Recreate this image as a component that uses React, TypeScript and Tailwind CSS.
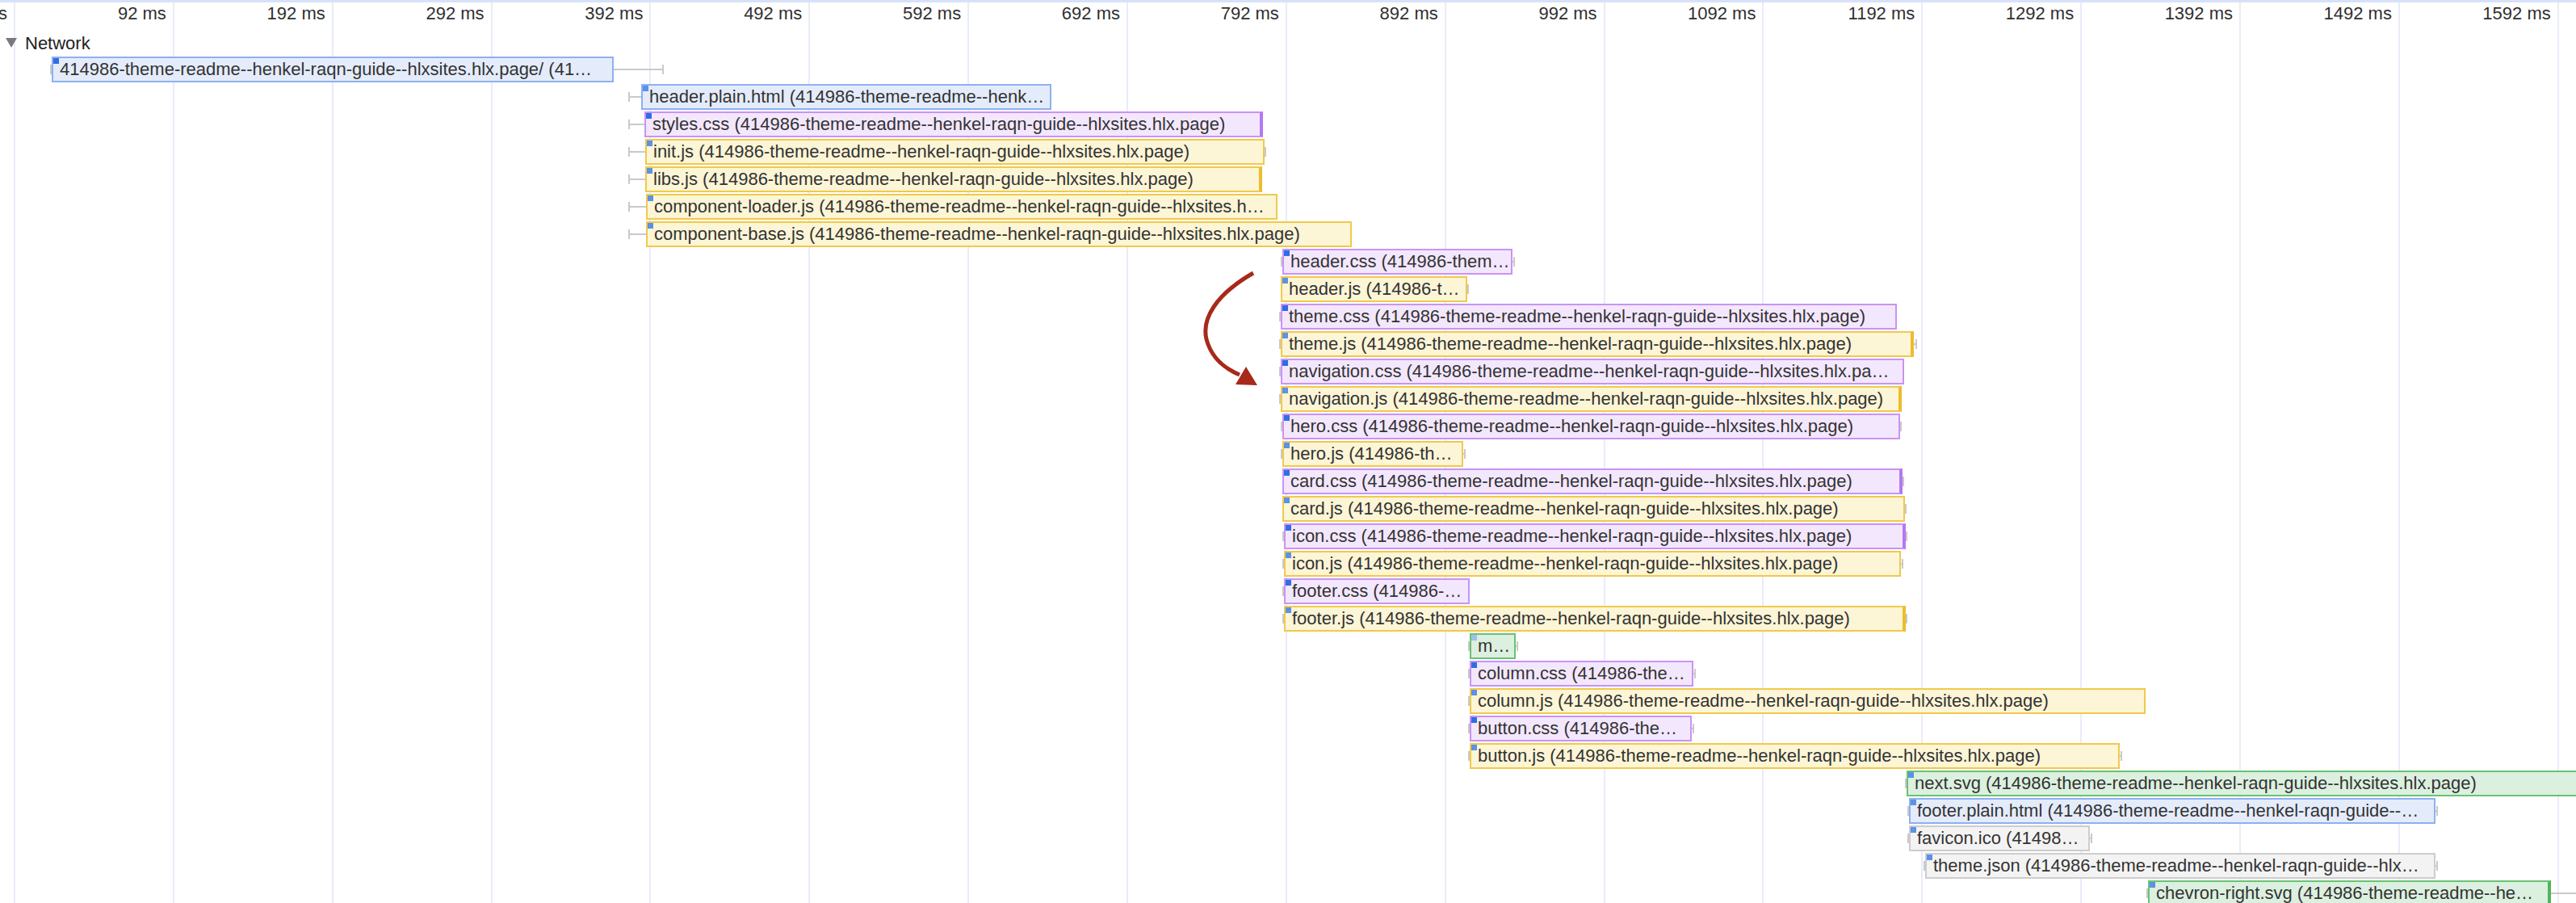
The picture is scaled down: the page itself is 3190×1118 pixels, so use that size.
import React from "react";

type Kind = "html" | "css" | "js" | "img" | "other";

type Req = {
  label: string;
  kind: Kind;
  left: number;
  right: number;
  wl?: number; // whisker start (left)
  wr?: number; // whisker end (right)
  sq?: string;
  thick?: boolean;
};

const SITE = "414986-theme-readme--henkel-raqn-guide--hlxsites.hlx.page";

const KIND: Record<Kind, string> = {
  html: "bg-[#e4ecfb] border-[#8db0f1]",
  css: "bg-[#f3e7fd] border-[#c993f6]",
  js: "bg-[#fcf5d6] border-[#f1c94b]",
  img: "bg-[#dcf0df] border-[#69c275]",
  other: "bg-[#f3f3f3] border-[#cdcdcd]",
};

const THICK: Record<Kind, string> = {
  html: "border-r-[4px] border-r-[#6f9cf0]",
  css: "border-r-[4px] border-r-[#b777f3]",
  js: "border-r-[4px] border-r-[#ecbd2c]",
  img: "border-r-[4px] border-r-[#52b35f]",
  other: "border-r-[4px] border-r-[#bdbdbd]",
};

const DARK = "#2e6ee6";
const LIGHT = "#5b92e6";

const rows: Req[] = [
  { label: `${SITE}/ (41…`, kind: "html", left: 64, right: 760, wl: 62, wr: 822, sq: DARK },
  { label: "header.plain.html (414986-theme-readme--henk…", kind: "html", left: 794, right: 1302, wl: 778, sq: LIGHT },
  { label: `styles.css (${SITE})`, kind: "css", left: 798, right: 1564, wl: 778, sq: DARK, thick: true },
  { label: `init.js (${SITE})`, kind: "js", left: 799, right: 1566, wl: 778, wr: 1568, sq: LIGHT },
  { label: `libs.js (${SITE})`, kind: "js", left: 799, right: 1563, wl: 778, sq: LIGHT, thick: true },
  { label: "component-loader.js (414986-theme-readme--henkel-raqn-guide--hlxsites.h…", kind: "js", left: 800, right: 1582, wl: 778, sq: LIGHT },
  { label: `component-base.js (${SITE})`, kind: "js", left: 800, right: 1674, wl: 778, sq: LIGHT },
  { label: "header.css (414986-them…", kind: "css", left: 1588, right: 1873, wl: 1586, wr: 1876, sq: DARK },
  { label: "header.js (414986-t…", kind: "js", left: 1586, right: 1817, wr: 1819, sq: LIGHT },
  { label: `theme.css (${SITE})`, kind: "css", left: 1586, right: 2349, wl: 1584, sq: DARK },
  { label: `theme.js (${SITE})`, kind: "js", left: 1586, right: 2370, wl: 1584, wr: 2374, sq: LIGHT, thick: true },
  { label: "navigation.css (414986-theme-readme--henkel-raqn-guide--hlxsites.hlx.pa…", kind: "css", left: 1586, right: 2358, wl: 1584, sq: DARK },
  { label: `navigation.js (${SITE})`, kind: "js", left: 1586, right: 2355, wl: 1584, sq: LIGHT, thick: true },
  { label: `hero.css (${SITE})`, kind: "css", left: 1588, right: 2353, wl: 1586, wr: 2355, sq: DARK },
  { label: "hero.js (414986-th…", kind: "js", left: 1588, right: 1812, wl: 1586, wr: 1815, sq: LIGHT },
  { label: `card.css (${SITE})`, kind: "css", left: 1588, right: 2356, wr: 2358, sq: DARK, thick: true },
  { label: `card.js (${SITE})`, kind: "js", left: 1588, right: 2359, wr: 2361, sq: LIGHT },
  { label: `icon.css (${SITE})`, kind: "css", left: 1590, right: 2360, wl: 1588, wr: 2362, sq: DARK, thick: true },
  { label: `icon.js (${SITE})`, kind: "js", left: 1590, right: 2354, wl: 1588, wr: 2357, sq: LIGHT },
  { label: "footer.css (414986-…", kind: "css", left: 1590, right: 1820, wl: 1588, sq: DARK },
  { label: `footer.js (${SITE})`, kind: "js", left: 1590, right: 2360, wl: 1588, wr: 2362, sq: LIGHT, thick: true },
  { label: "m…", kind: "img", left: 1820, right: 1877, wl: 1818, wr: 1880, sq: "#9dc2ea" },
  { label: "column.css (414986-the…", kind: "css", left: 1820, right: 2097, wl: 1818, wr: 2100, sq: DARK },
  { label: `column.js (${SITE})`, kind: "js", left: 1820, right: 2657, wl: 1818, sq: LIGHT },
  { label: "button.css (414986-the…", kind: "css", left: 1820, right: 2095, wl: 1818, wr: 2098, sq: DARK },
  { label: `button.js (${SITE})`, kind: "js", left: 1820, right: 2625, wl: 1818, wr: 2628, sq: LIGHT },
  { label: `next.svg (${SITE})`, kind: "img", left: 2361, right: 3200, wl: 2359, sq: LIGHT },
  { label: "footer.plain.html (414986-theme-readme--henkel-raqn-guide--…", kind: "html", left: 2364, right: 3016, wl: 2362, wr: 3019, sq: LIGHT },
  { label: "favicon.ico (41498…", kind: "other", left: 2364, right: 2588, wl: 2362, wr: 2591, sq: LIGHT },
  { label: "theme.json (414986-theme-readme--henkel-raqn-guide--hlx…", kind: "other", left: 2384, right: 3016, wl: 2382, wr: 3019, sq: LIGHT },
  { label: "chevron-right.svg (414986-theme-readme--he…", kind: "img", left: 2660, right: 3159, wl: 2658, wr: 3200, sq: LIGHT, thick: true },
];

// grid: 100 ms every 196.87px, first line at 18px (-8 ms)
const STEP = 196.87;
const FIRST = 18;
const ticks = Array.from({ length: 17 }, (_, k) => k * 100 - 8);

function Whisker({ from, to, tickAt }: { from: number; to: number; tickAt: "start" | "end" }) {
  return (
    <div className={`flex h-[12px] shrink-0 items-center ${tickAt === "end" ? "flex-row-reverse" : ""}`} style={{ width: to - from }}>
      <div className="h-[12px] w-[2px] shrink-0 bg-[#c9c9c9]" />
      <div className="h-[2px] grow bg-[#c9c9c9]" />
    </div>
  );
}

function Row({ r }: { r: Req }) {
  const start = r.wl ?? r.left;
  return (
    <div className="flex h-[32px] shrink-0 items-center">
      <div className="shrink-0" style={{ width: start }} />
      {r.wl !== undefined && <Whisker from={r.wl} to={r.left} tickAt="start" />}
      <div
        className={`relative h-[32px] shrink-0 border-2 ${KIND[r.kind]} ${r.thick ? THICK[r.kind] : ""} overflow-hidden whitespace-nowrap pl-[8px] text-[22px] leading-[28px] text-[#333]`}
        style={{ width: r.right - r.left }}
      >
        <span className="absolute left-0 top-0 h-[7px] w-[7px]" style={{ background: r.sq }} />
        {r.label}
      </div>
      {r.wr !== undefined && <Whisker from={r.right} to={r.wr} tickAt="end" />}
    </div>
  );
}

export default function App() {
  return (
    <div
      className="relative h-[1118px] w-[3190px] overflow-hidden bg-white text-[#333]"
      style={{ fontFamily: '"Liberation Sans", Arial, sans-serif' }}
    >
      {/* grid lines, drawn behind everything */}
      <div className="pointer-events-none absolute inset-0 flex">
        <div className="shrink-0" style={{ width: FIRST - 1 }} />
        {ticks.map((ms) => (
          <div key={ms} className="flex shrink-0" style={{ width: STEP }}>
            <div className="h-full w-[2px] bg-[#e8ecfa]" />
          </div>
        ))}
      </div>

      <div className="relative flex h-full flex-col">
        <div className="h-[3px] shrink-0 bg-[#d5e2f7]" />

        {/* time ruler: each cell ends on its grid line */}
        <div className="flex h-[28px] shrink-0 text-[22px] leading-[28px] text-[#303030]">
          {ticks.map((ms, k) => (
            <div
              key={ms}
              className="shrink-0 overflow-hidden whitespace-nowrap pr-[9px] text-right"
              style={{ width: k === 0 ? FIRST : STEP, direction: k === 0 ? "rtl" : undefined }}
            >
              <span style={{ direction: "ltr", unicodeBidi: "isolate" }}>{ms} ms</span>
            </div>
          ))}
        </div>

        {/* track header */}
        <div className="flex h-[39px] shrink-0 items-center gap-[10px] pl-[7px] pt-[5px] text-[22px] text-[#222]">
          <svg width="14" height="12" viewBox="0 0 14 12">
            <path d="M0 0 H14 L7 12 Z" fill="#7a7a7a" />
          </svg>
          <span>Network</span>
        </div>

        <div className="flex flex-col gap-[2px]">
          {rows.map((r, i) => (
            <Row key={i} r={r} />
          ))}
        </div>

        <div className="mt-auto h-[3px] shrink-0 bg-[#d5e2f7]" />
      </div>

      {/* annotation arrow */}
      <svg className="pointer-events-none absolute left-0 top-0" width="3190" height="1118">
        <path
          d="M1552 338 C1505 365 1488 395 1494 420 C1500 443 1516 456 1535 464"
          fill="none"
          stroke="#a8291a"
          strokeWidth="5"
        />
        <path d="M1530 476 L1543 454 L1557 477 Z" fill="#a8291a" />
      </svg>
    </div>
  );
}
